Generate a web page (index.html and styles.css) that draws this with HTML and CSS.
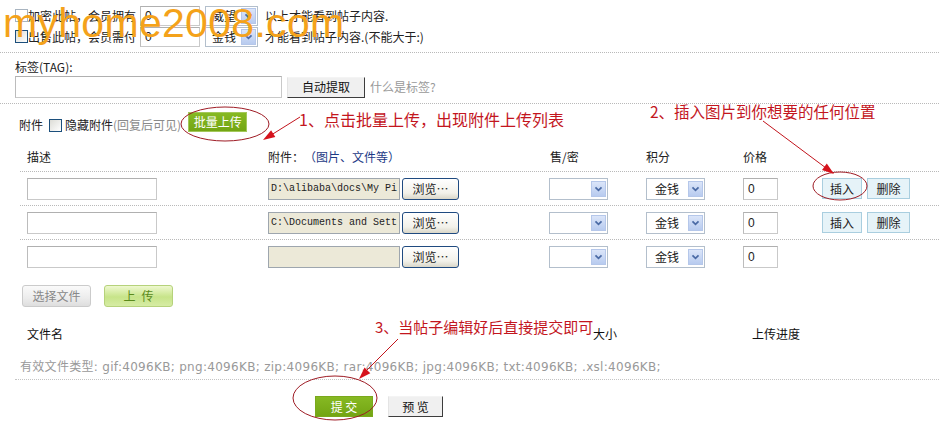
FILE: index.html
```html
<!DOCTYPE html>
<html lang="zh-CN">
<head>
<meta charset="utf-8">
<title>发帖附件</title>
<link rel="stylesheet" href="styles.css">
</head>
<body>
<div class="page">
  <section class="perm">
    <div class="perm-row">
      <span class="chk chk-faint"></span>
      <span class="perm-label">加密此帖，会员拥有</span>
      <span class="field field-num">0</span>
      <span class="sel sel-top"><span class="sel-text">威望</span><svg class="sel-arrow" viewBox="0 0 15 15"><path d="M4 5.5 L7.5 9 L11 5.5" fill="none" stroke="#4a6aa5" stroke-width="2"/></svg></span>
      <span class="perm-after">以上才能看到帖子内容.</span>
    </div>
    <div class="perm-row">
      <span class="chk"></span>
      <span class="perm-label">出售此帖，会员需付</span>
      <span class="field field-num">0</span>
      <span class="sel sel-top"><span class="sel-text">金钱</span><svg class="sel-arrow" viewBox="0 0 15 15"><path d="M4 5.5 L7.5 9 L11 5.5" fill="none" stroke="#4a6aa5" stroke-width="2"/></svg></span>
      <span class="perm-after">才能看到帖子内容.(不能大于:)</span>
    </div>
  </section>

  <section class="tag">
    <div class="tag-label">标签(TAG):</div>
    <div class="tag-row">
      <span class="field field-tag"></span>
      <span class="btn-classic btn-auto">自动提取</span>
      <span class="tag-help">什么是标签?</span>
    </div>
  </section>

  <section class="attach-bar">
    <span>附件</span>
    <span class="chk chk-hide"></span>
    <span>隐藏附件</span><span class="muted">(回复后可见)</span>
    <span class="btn-green btn-batch">批量上传</span>
  </section>

  <section class="tbl">
    <div class="thead">
      <span class="c1">描述</span>
      <span class="c2">附件：<span class="navy">（图片、文件等）</span></span>
      <span class="c3">售/密</span>
      <span class="c4">积分</span>
      <span class="c5">价格</span>
      <span class="c6"></span>
    </div>
    <div class="trow">
      <span class="c1"><span class="field field-desc"></span></span>
      <span class="c2"><span class="file">D:\alibaba\docs\My Pi</span><span class="btn-browse">浏览…</span></span>
      <span class="c3"><span class="sel sel-tbl"><span class="sel-text"></span><svg class="sel-arrow" viewBox="0 0 15 15"><path d="M4 5.5 L7.5 9 L11 5.5" fill="none" stroke="#4a6aa5" stroke-width="2"/></svg></span></span>
      <span class="c4"><span class="sel sel-tbl"><span class="sel-text">金钱</span><svg class="sel-arrow" viewBox="0 0 15 15"><path d="M4 5.5 L7.5 9 L11 5.5" fill="none" stroke="#4a6aa5" stroke-width="2"/></svg></span></span>
      <span class="c5"><span class="field field-price">0</span></span>
      <span class="c6"><span class="btn-blue btn-ins">插入</span><span class="btn-blue btn-del">删除</span></span>
    </div>
    <div class="trow">
      <span class="c1"><span class="field field-desc"></span></span>
      <span class="c2"><span class="file">C:\Documents and Sett</span><span class="btn-browse">浏览…</span></span>
      <span class="c3"><span class="sel sel-tbl"><span class="sel-text"></span><svg class="sel-arrow" viewBox="0 0 15 15"><path d="M4 5.5 L7.5 9 L11 5.5" fill="none" stroke="#4a6aa5" stroke-width="2"/></svg></span></span>
      <span class="c4"><span class="sel sel-tbl"><span class="sel-text">金钱</span><svg class="sel-arrow" viewBox="0 0 15 15"><path d="M4 5.5 L7.5 9 L11 5.5" fill="none" stroke="#4a6aa5" stroke-width="2"/></svg></span></span>
      <span class="c5"><span class="field field-price">0</span></span>
      <span class="c6"><span class="btn-blue btn-ins">插入</span><span class="btn-blue btn-del">删除</span></span>
    </div>
    <div class="trow trow-last">
      <span class="c1"><span class="field field-desc"></span></span>
      <span class="c2"><span class="file"></span><span class="btn-browse">浏览…</span></span>
      <span class="c3"><span class="sel sel-tbl"><span class="sel-text"></span><svg class="sel-arrow" viewBox="0 0 15 15"><path d="M4 5.5 L7.5 9 L11 5.5" fill="none" stroke="#4a6aa5" stroke-width="2"/></svg></span></span>
      <span class="c4"><span class="sel sel-tbl"><span class="sel-text">金钱</span><svg class="sel-arrow" viewBox="0 0 15 15"><path d="M4 5.5 L7.5 9 L11 5.5" fill="none" stroke="#4a6aa5" stroke-width="2"/></svg></span></span>
      <span class="c5"><span class="field field-price">0</span></span>
      <span class="c6"></span>
    </div>
  </section>

  <section class="up-btns">
    <span class="btn-choose">选择文件</span>
    <span class="btn-upload">上&ensp;传</span>
  </section>

  <section class="fhead">
    <span class="fh1">文件名</span>
    <span class="fh2">大小</span>
    <span class="fh3">上传进度</span>
  </section>

  <section class="ftypes">有效文件类型: gif:4096KB; png:4096KB; zip:4096KB; rar:4096KB; jpg:4096KB; txt:4096KB; .xsl:4096KB;</section>

  <section class="submit-row">
    <span class="btn-green btn-submit">提 交</span>
    <span class="btn-classic btn-preview">预 览</span>
  </section>

  <div class="watermark">myhome2008.com</div>

  <svg class="marks" viewBox="0 0 939 422" width="939" height="422">
    <g fill="none" stroke="#9e1b24" stroke-width="1">
      <ellipse cx="225" cy="124" rx="44" ry="17"/>
      <ellipse cx="840" cy="186" rx="27" ry="14"/>
      <ellipse cx="335" cy="398" rx="42" ry="22"/>
    </g>
    <g stroke="#c2141c" stroke-width="1">
      <line x1="300" y1="117" x2="268" y2="137"/>
      <line x1="763" y1="121" x2="826" y2="168"/>
      <line x1="398" y1="339" x2="364" y2="373"/>
    </g>
    <g fill="#d6121c">
      <polygon points="263,140 275.3,137.1 271.1,130.3"/>
      <polygon points="834,174 822,170 826.8,163.6"/>
      <polygon points="359,379 370.3,373.2 364.5,367.6"/>
    </g>
  </svg>

  <div class="note note-1">1、点击批量上传，出现附件上传列表</div>
  <div class="note note-2">2、插入图片到你想要的任何位置</div>
  <div class="note note-3">3、当帖子编辑好后直接提交即可</div>
</div>
</body>
</html>
```

FILE: styles.css
```css
* { box-sizing: border-box; }

body {
  margin: 0;
  background: #fff;
  color: #222;
  font-family: "Noto Sans CJK SC", "Liberation Sans", sans-serif;
  font-size: 12px;
  line-height: 14px;
}

.page {
  position: relative;
  width: 939px;
  height: 422px;
  overflow: hidden;
}

/* generic controls */
.chk {
  display: inline-block;
  width: 13px;
  height: 13px;
  border: 1px solid #1c4f7c;
  background: linear-gradient(135deg, #dcdcd6, #fff);
}
.chk-faint { border-color: #a8b4c0; background: #fff; }

.field {
  display: inline-flex;
  align-items: center;
  height: 22px;
  padding: 0 4px;
  background: #fff;
  border: 1px solid #c9c9c9;
  border-top-color: #b0b0b0;
  border-left-color: #bcbcbc;
  font-family: "Liberation Sans", sans-serif;
  font-size: 12px;
}

.sel {
  display: inline-flex;
  align-items: center;
  justify-content: space-between;
  background: #fff;
  border: 1px solid #b3bfcc;
  padding: 0 1px 0 6px;
}
.sel-text { white-space: nowrap; }
.sel-arrow {
  width: 15px;
  height: 16px;
  background: linear-gradient(#dbe5f9, #b8cbef);
  border: 1px solid #b5c7ea;
  flex: none;
}

/* permission rows */
.perm {
  height: 53px;
  padding: 5px 0 0 15px;
  border-bottom: 1px dotted #b9b9b9;
}
.perm-row {
  display: flex;
  align-items: center;
  height: 21px;
}
.perm-label { white-space: nowrap; }
.field-num { width: 60px; height: 20px; margin-left: 4px; }
.sel-top { width: 53px; height: 20px; margin-left: 5px; }
.perm-after { margin-left: 7px; white-space: nowrap; }

/* tag */
.tag {
  height: 51px;
  padding: 7px 0 0 15px;
  border-bottom: 1px dotted #b9b9b9;
}
.tag-label { height: 14px; }
.tag-row {
  display: flex;
  align-items: center;
  margin-top: 2px;
  height: 22px;
}
.field-tag { width: 267px; height: 22px; }
.btn-classic {
  display: inline-flex;
  align-items: center;
  justify-content: center;
  background: #f0f0f0;
  border: 1px solid;
  border-color: #f4f4f4 #3d3d3d #3d3d3d #e4e4e4;
  color: #111;
}
.btn-auto { width: 78px; height: 21px; margin-left: 5px; }
.tag-help { margin-left: 5px; color: #999; }

/* attach bar */
.attach-bar {
  display: flex;
  align-items: center;
  height: 42px;
  padding-left: 19px;
}
.chk-hide { margin: 0 3px 0 6px; }
.muted { color: #8a8a8a; }
.btn-green {
  display: inline-flex;
  align-items: center;
  justify-content: center;
  color: #fff;
  background: linear-gradient(#86b923, #73a513);
  border: 1px solid #a3c85a;
}
.btn-batch {
  align-self: flex-start;
  margin: 8px 0 0 7px;
  width: 59px;
  height: 20px;
}

/* table */
.tbl { margin-left: 20px; }
.thead, .trow { display: flex; align-items: center; }
.thead {
  height: 26px;
  padding-bottom: 3px;
  border-bottom: 1px dotted #b9b9b9;
}
.trow {
  height: 34px;
  border-bottom: 1px dotted #b9b9b9;
}
.trow-last { border-bottom: 0; }
.c1 { width: 248px; padding-left: 7px; display: flex; }
.c2 { width: 281px; display: flex; align-items: center; }
.c3 { width: 97px; display: flex; padding-left: 1px; }
.c4 { width: 97px; display: flex; }
.c5 { width: 79px; display: flex; }
.c6 { flex: 1; display: flex; align-items: center; }
.trow .c3 { padding-left: 0; }
.navy { color: #1d3a86; }

.field-desc { width: 130px; }
.field-price { width: 35px; }
.file {
  display: inline-flex;
  align-items: center;
  width: 132px;
  height: 22px;
  padding: 0 2px;
  background: #ece9d8;
  border: 1px solid #9ea6ae;
  font-family: "Liberation Mono", monospace;
  font-size: 10px;
  white-space: nowrap;
  overflow: hidden;
}
.btn-browse {
  display: inline-flex;
  align-items: center;
  justify-content: center;
  width: 57px;
  height: 22px;
  margin-left: 2px;
  border: 1px solid #1f4a80;
  border-radius: 3px;
  background: linear-gradient(#ffffff, #f2f1ea 70%, #d9d6c8);
}
.sel-tbl { width: 59px; height: 22px; padding-left: 8px; }
.btn-blue {
  display: inline-flex;
  align-items: center;
  justify-content: center;
  height: 21px;
  background: #e6f3f8;
  border: 1px solid #a9cedf;
}
.btn-ins { width: 40px; }
.btn-del { width: 43px; margin-left: 5px; }

/* upload buttons */
.up-btns {
  display: flex;
  gap: 13px;
  margin: 11px 0 0 22px;
}
.btn-choose, .btn-upload {
  display: inline-flex;
  align-items: center;
  justify-content: center;
  width: 69px;
  height: 22px;
  border-radius: 3px;
}
.btn-choose {
  color: #888;
  background: linear-gradient(#fafafa, #ececec 60%, #dedede);
  border: 1px solid #cbcbcb;
}
.btn-upload {
  color: #5a8a1c;
  background: linear-gradient(#eef8cf, #c7e489 55%, #d6eca4);
  border: 1px solid #b6d27b;
}

/* file head */
.fhead {
  display: flex;
  align-items: center;
  height: 26px;
  margin-top: 14px;
  padding-left: 27px;
  color: #111;
}
.fh1 { width: 566px; }
.fh2 { width: 159px; }

.ftypes {
  display: flex;
  align-items: center;
  height: 25px;
  margin: 8px 0 0 15px;
  padding-left: 5px;
  color: #999;
  font-family: "DejaVu Sans", "Noto Sans CJK SC", sans-serif;
  letter-spacing: 0.3px;
  border-bottom: 1px dotted #c4c4c4;
}

.submit-row {
  display: flex;
  gap: 15px;
  margin-top: 16px;
  padding-left: 315px;
}
.btn-submit { width: 58px; height: 21px; border-color: #7aa81c; }
.btn-preview { width: 55px; height: 21px; }

/* overlays */
.watermark {
  position: absolute;
  left: 3px;
  top: 3px;
  font-family: "Liberation Sans", sans-serif;
  font-size: 41px;
  line-height: 41px;
  letter-spacing: 0.3px;
  color: #f4a21a;
  white-space: nowrap;
}
.marks {
  position: absolute;
  left: 0;
  top: 0;
  pointer-events: none;
}
.note {
  position: absolute;
  color: #c3161e;
  white-space: nowrap;
  font-family: "Noto Sans CJK SC", sans-serif;
}
.note-1 { left: 299px; top: 109px; font-size: 16px; line-height: 20px; }
.note-2 { left: 650px; top: 101px; font-size: 15.5px; line-height: 20px; }
.note-3 { left: 375px; top: 317px; font-size: 15px; line-height: 20px; }
```
